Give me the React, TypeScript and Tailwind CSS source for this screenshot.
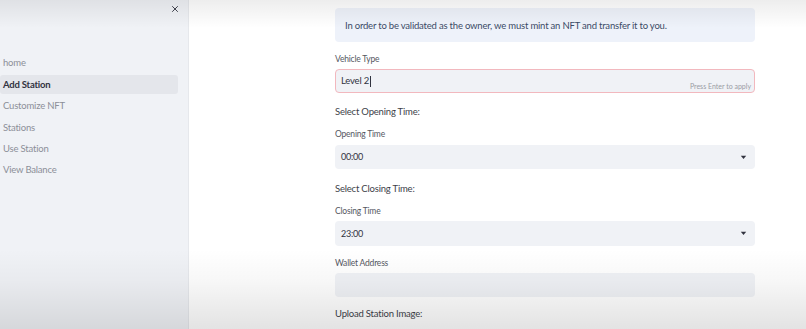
import React from "react";
import { X } from "lucide-react";

const font = { fontFamily: 'Lato, "Noto Sans", sans-serif' };

function Caret() {
  return (
    <svg width="7" height="5" viewBox="0 0 7 5" className="shrink-0">
      <path d="M0.8 0.8 L6.2 0.8 L3.5 4 Z" fill="#31333f" />
    </svg>
  );
}

export default function App() {
  const nav = ["home", "Add Station", "Customize NFT", "Stations", "Use Station", "View Balance"];
  return (
    <div className="relative w-[806px] h-[329px] overflow-hidden bg-white flex" style={font}>
      {/* Sidebar */}
      <div className="w-[189px] h-full bg-[#f0f2f6] border-r border-[#e6e8ec] flex flex-col shrink-0">
        <div className="h-[54px] flex justify-end pr-[8px] pt-[4px]">
          <X size={10} strokeWidth={2.2} color="#31333f" />
        </div>
        <div className="flex flex-col pr-[10px]">
          {nav.map((n) => (
            <div
              key={n}
              className={
                "h-[19px] mb-[2.4px] flex items-center pl-[3px] text-[9.5px] tracking-[-0.2px] rounded-[3px] " +
                (n === "Add Station" ? "bg-[#e4e6eb] text-[#31333f] font-bold" : "text-[#8c8f98]")
              }
            >
              {n}
            </div>
          ))}
        </div>
      </div>

      {/* Main */}
      <div className="flex-1 flex justify-start pl-[146px]">
        <div className="w-[420px] flex flex-col pt-[8px] text-[#3d3f4a] tracking-[-0.2px]">
          <div className="h-[34px] bg-[#eef2fa] rounded-[4px] flex items-center px-[10px] pt-[2px] text-[9.5px] text-[#3b4a66]">
            In order to be validated as the owner, we must mint an NFT and transfer it to you.
          </div>

          <div className="mt-[11px] text-[8.5px] leading-[12px] text-[#55575f]">Vehicle Type</div>
          <div className="mt-[4px] h-[24px] bg-[#f0f2f6] border border-[#f2b8be] rounded-[4px] flex items-center px-[5px] relative">
            <span className="text-[9.5px] text-[#31333f]">Level 2</span>
            <span className="w-px h-[11px] bg-[#31333f] ml-[1px]" />
            <span className="absolute right-[3px] bottom-[1px] text-[7px] tracking-normal text-[#9a9ca4]">Press Enter to apply</span>
          </div>

          <div className="mt-[12px] text-[9.5px] leading-[14px]">Select Opening Time:</div>
          <div className="mt-[9px] text-[8.5px] leading-[12px] text-[#55575f]">Opening Time</div>
          <div className="mt-[5px] h-[24px] bg-[#f0f2f6] rounded-[4px] flex items-center justify-between pl-[6px] pr-[8px]">
            <span className="text-[9px] text-[#31333f]">00:00</span>
            <Caret />
          </div>

          <div className="mt-[13px] text-[9.5px] leading-[14px]">Select Closing Time:</div>
          <div className="mt-[9px] text-[8.5px] leading-[12px] text-[#55575f]">Closing Time</div>
          <div className="mt-[4px] h-[25px] bg-[#f0f2f6] rounded-[4px] flex items-center justify-between pl-[6px] pr-[8px]">
            <span className="text-[9px] text-[#31333f]">23:00</span>
            <Caret />
          </div>

          <div className="mt-[11px] text-[8.5px] leading-[12px] text-[#55575f]">Wallet Address</div>
          <div className="mt-[4px] h-[24px] bg-[#f0f2f6] rounded-[4px]" />

          <div className="mt-[10px] text-[9.5px] leading-[14px]">Upload Station Image:</div>
        </div>
      </div>

      {/* video overlays */}
      <div className="absolute left-0 right-0 top-0 h-[28px] pointer-events-none bg-[linear-gradient(to_bottom,rgba(0,0,0,0.07),rgba(0,0,0,0))]" />
      <div className="absolute left-0 right-0 bottom-0 h-[80px] pointer-events-none bg-[linear-gradient(to_top,rgba(0,0,0,0.11),rgba(0,0,0,0.03)_60%,rgba(0,0,0,0))]" />
    </div>
  );
}
